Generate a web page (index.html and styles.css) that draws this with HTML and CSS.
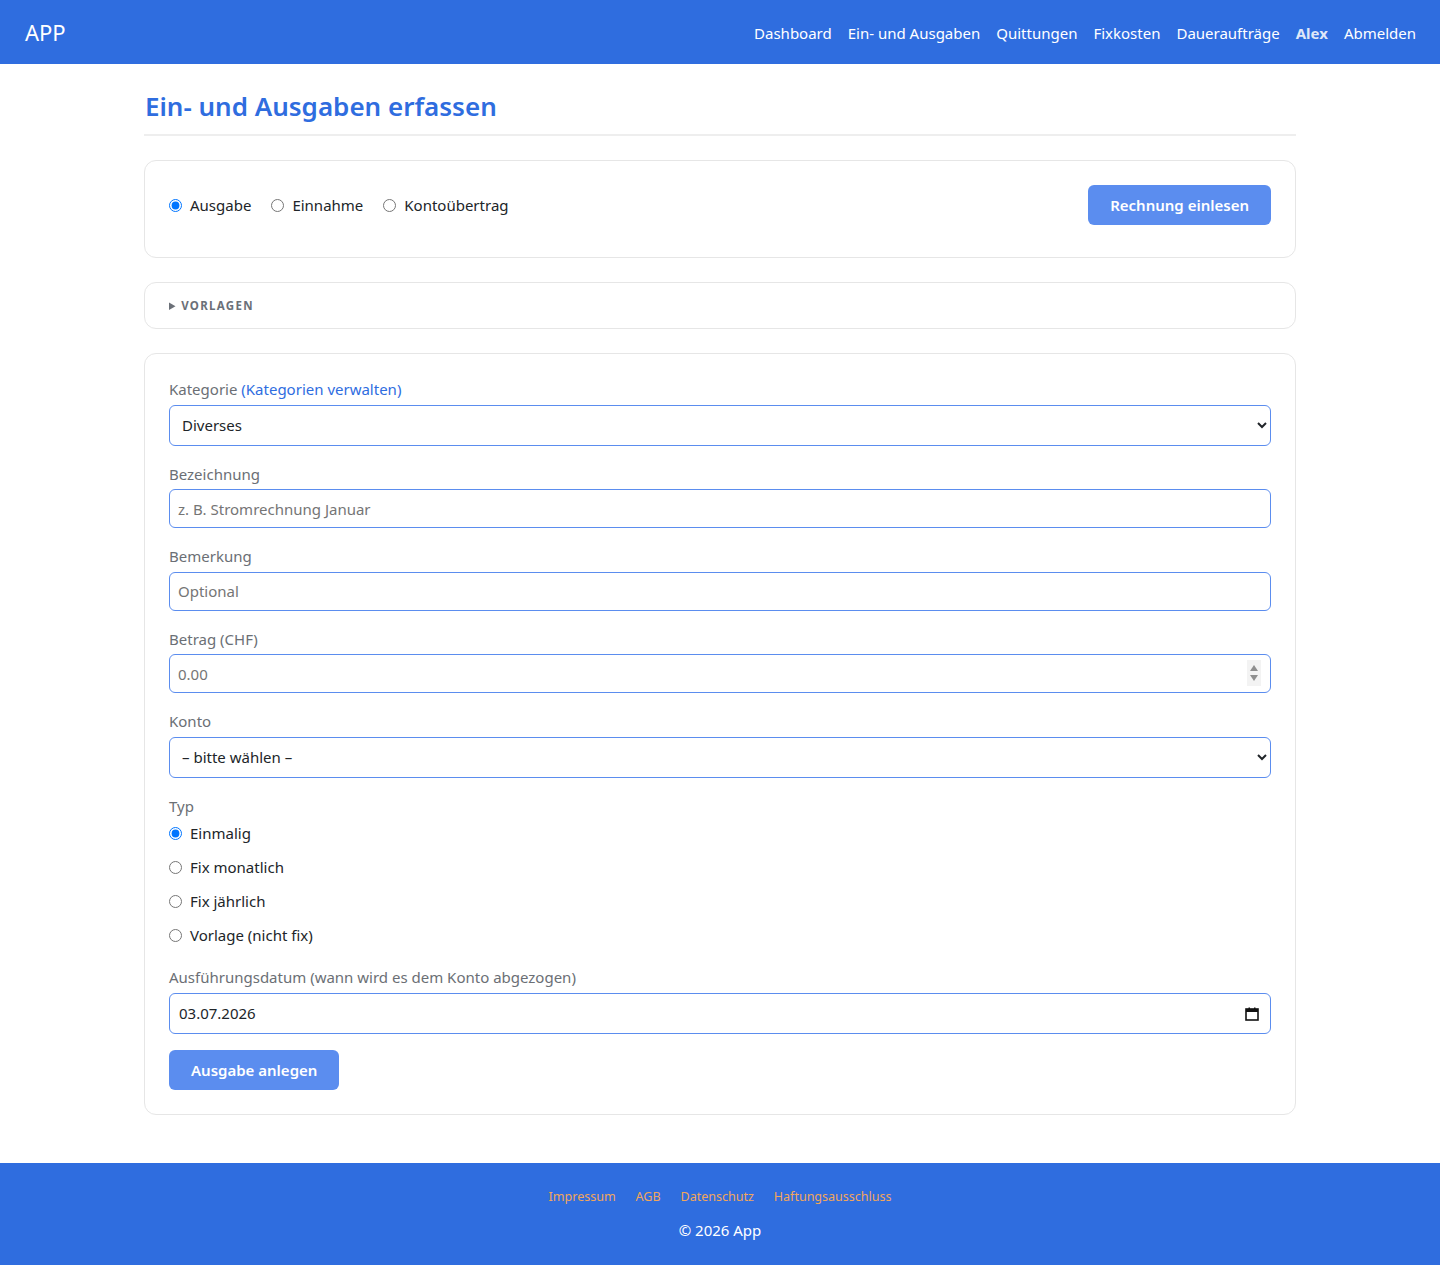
FILE: index.html
```html
<!DOCTYPE html>
<html lang="de">
<head>
  <meta charset="UTF-8">
  <meta name="viewport" content="width=device-width, initial-scale=1.0">
  <title>Ein- und Ausgaben erfassen</title>
  <link rel="stylesheet" href="styles.css">
</head>
<body>
  <header class="navbar">
    <a class="brand" href="#">APP</a>
    <nav class="nav-links">
      <a href="#">Dashboard</a>
      <a href="#">Ein- und Ausgaben</a>
      <a href="#">Quittungen</a>
      <a href="#">Fixkosten</a>
      <a href="#">Daueraufträge</a>
      <a href="#" class="user">Alex</a>
      <a href="#">Abmelden</a>
    </nav>
  </header>

  <main class="container">
    <h1 class="page-title">Ein- und Ausgaben erfassen</h1>

    <section class="card mode-card">
      <div class="mode-options">
        <label class="radio"><input type="radio" name="mode" checked>Ausgabe</label>
        <label class="radio"><input type="radio" name="mode">Einnahme</label>
        <label class="radio"><input type="radio" name="mode">Kontoübertrag</label>
      </div>
      <button class="btn" type="button">Rechnung einlesen</button>
    </section>

    <details class="card templates">
      <summary>Vorlagen</summary>
    </details>

    <form class="card entry-form">
      <div class="field">
        <label for="kategorie">Kategorie <a href="#">(Kategorien verwalten)</a></label>
        <select id="kategorie" class="control select">
          <option>Diverses</option>
        </select>
      </div>

      <div class="field">
        <label for="bezeichnung">Bezeichnung</label>
        <input id="bezeichnung" class="control" type="text" placeholder="z. B. Stromrechnung Januar">
      </div>

      <div class="field">
        <label for="bemerkung">Bemerkung</label>
        <input id="bemerkung" class="control" type="text" placeholder="Optional">
      </div>

      <div class="field">
        <label for="betrag">Betrag (CHF)</label>
        <div class="input-wrap">
          <input id="betrag" class="control" type="text" inputmode="decimal" placeholder="0.00">
          <!-- spin buttons -->
          <svg class="spinner" width="14" height="26" viewBox="0 0 14 26">
            <rect width="14" height="26" fill="#f3f3f3"/>
            <path d="M3 11 L7 5 L11 11 Z" fill="#8f8f8f"/>
            <path d="M3 15 L11 15 L7 21 Z" fill="#8f8f8f"/>
          </svg>
        </div>
      </div>

      <div class="field">
        <label for="konto">Konto</label>
        <select id="konto" class="control select">
          <option>– bitte wählen –</option>
        </select>
      </div>

      <div class="field type-field">
        <span class="field-label">Typ</span>
        <div class="type-options">
          <label class="radio"><input type="radio" name="typ" checked>Einmalig</label>
          <label class="radio"><input type="radio" name="typ">Fix monatlich</label>
          <label class="radio"><input type="radio" name="typ">Fix jährlich</label>
          <label class="radio"><input type="radio" name="typ">Vorlage (nicht fix)</label>
        </div>
      </div>

      <div class="field last-field">
        <label for="datum">Ausführungsdatum (wann wird es dem Konto abgezogen)</label>
        <div class="input-wrap">
          <input id="datum" class="control date" type="text" value="03.07.2026">
          <svg class="calendar" width="14" height="14" viewBox="0 0 14 14">
            <rect x="1" y="2" width="12" height="11" fill="none" stroke="#111" stroke-width="1.6"/>
            <rect x="1" y="2" width="12" height="3" fill="#111"/>
            <rect x="3.5" y="0.5" width="1.5" height="2.5" fill="#111"/>
            <rect x="9" y="0.5" width="1.5" height="2.5" fill="#111"/>
          </svg>
        </div>
      </div>

      <button class="btn" type="submit">Ausgabe anlegen</button>
    </form>
  </main>

  <footer class="footer">
    <div class="footer-links">
      <a href="#">Impressum</a>
      <a href="#">AGB</a>
      <a href="#">Datenschutz</a>
      <a href="#">Haftungsausschluss</a>
    </div>
    <p>© 2026 App</p>
  </footer>
</body>
</html>
```

FILE: styles.css
```css
body {
  margin: 0;
  font-family: "Segoe UI", "Noto Sans", sans-serif;
  font-size: 15px;
  line-height: 1.5;
  color: #212529;
  background: #fff;
}

a {
  text-decoration: none;
}

.navbar {
  height: 64px;
  background: #2f6ddf;
  display: flex;
  align-items: center;
  justify-content: space-between;
  padding: 0 24px;
}

.brand {
  color: #fff;
  font-size: 22px;
  margin-left: 1px;
}

.nav-links {
  display: flex;
  gap: 16px;
  padding-top: 2px;
}

.nav-links a {
  color: #fff;
}

.nav-links .user {
  font-weight: 700;
  color: #dfe7f8;
}

.container {
  max-width: 1152px;
  margin: 0 auto;
  padding-bottom: 48px;
}

.page-title {
  margin: 22px 0 24px;
  padding: 0 0 8px 1px;
  font-size: 26px;
  font-weight: 600;
  color: #2f6ddf;
  line-height: 40px;
  border-bottom: 2px solid #eeeeee;
}

.card {
  border: 1px solid #e6e6e6;
  border-radius: 12px;
  background: #fff;
  margin-bottom: 24px;
  padding: 24px;
}

.mode-card {
  display: flex;
  align-items: flex-start;
  justify-content: space-between;
  padding-bottom: 32px;
}

.mode-options {
  display: flex;
  gap: 20px;
  padding-top: 8px;
}

.radio {
  display: flex;
  align-items: center;
  gap: 8px;
  height: 24px;
  color: #212529;
}

.radio input {
  margin: 0;
  width: 13px;
  height: 13px;
}

.btn {
  background: #5b8def;
  color: #fff;
  border: none;
  border-radius: 6px;
  font-family: inherit;
  font-size: 15px;
  font-weight: 600;
  height: 40px;
  padding: 0 22px;
  cursor: pointer;
}

.templates {
  padding: 12px 24px;
}

.templates summary {
  font-size: 11.5px;
  font-weight: 700;
  letter-spacing: 1.3px;
  text-transform: uppercase;
  color: #6b7078;
  line-height: 21px;
  cursor: pointer;
}

.entry-form {
  display: block;
  margin-bottom: 0;
}

.field {
  margin-bottom: 17px;
}

.field > label,
.field-label {
  display: block;
  color: #6b6f75;
  margin-bottom: 4px;
}

.field > label a {
  color: #2f6ddf;
}

.input-wrap {
  position: relative;
}

.control {
  display: block;
  box-sizing: border-box;
  width: 100%;
  height: 39px;
  border: 1px solid #5b8def;
  border-radius: 6px;
  padding: 0 8px;
  font-family: inherit;
  font-size: 15px;
  color: #212529;
  background: #fff;
}

.control::placeholder {
  color: #757575;
}

.select {
  height: 41px;
  padding: 0 8px;
}

.date {
  height: 41px;
  padding: 0 9px;
}

.spinner {
  position: absolute;
  right: 10px;
  top: 6px;
}

.calendar {
  position: absolute;
  right: 12px;
  top: 14px;
}

.type-field {
  margin-bottom: 19px;
}

.type-field .field-label {
  margin-bottom: 4px;
}

.type-options {
  display: flex;
  flex-direction: column;
  gap: 10px;
}

.last-field {
  margin-bottom: 16px;
}

.footer {
  background: #2f6ddf;
  text-align: center;
  padding: 23px 0 23px;
}

.footer-links {
  display: flex;
  justify-content: center;
  gap: 20px;
  font-size: 12.5px;
  line-height: 21px;
}

.footer-links a {
  color: #f2a65a;
}

.footer p {
  margin: 11px 0 0;
  color: #fff;
  line-height: 24px;
}
```
